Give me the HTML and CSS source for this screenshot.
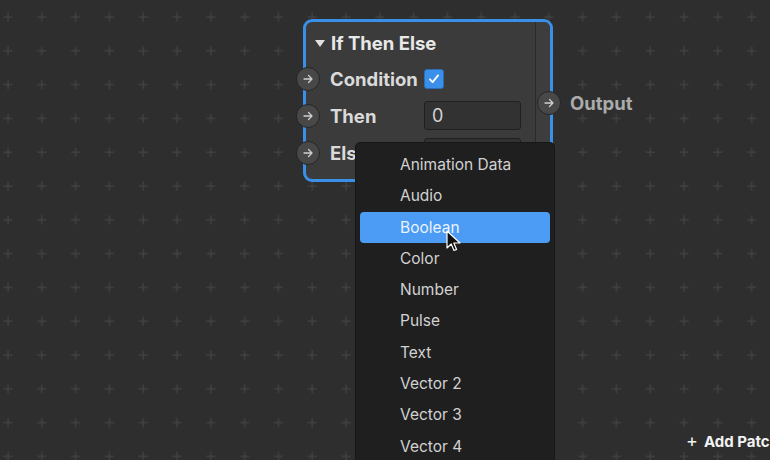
FILE: index.html
```html
<!DOCTYPE html>
<html lang="en">
<head>
    <meta charset="UTF-8">
    <title>Patch Editor</title>
    <link rel="stylesheet" href="styles.css">
</head>
<body>

    <!-- Canvas with dot grid -->
    <div class="canvas">
        <svg class="grid" width="100%" height="100%">
            <defs>
                <pattern id="plus" x="-9" y="0" width="33.8" height="33.8" patternUnits="userSpaceOnUse">
                    <path d="M12.5 17h9M17 12.5v9" stroke="#434343" stroke-width="1.2"/>
                </pattern>
            </defs>
            <rect width="100%" height="100%" fill="url(#plus)"/>
        </svg>

        <!-- Patch node -->
        <div class="node">
            <div class="node-main">
                <div class="node-title">
                    <span class="caret"></span>
                    If Then Else
                </div>
                <div class="node-row">
                    <span class="port"><svg viewBox="0 0 12 12"><path d="M2 6h8M6.5 2.5 10 6l-3.5 3.5"/></svg></span>
                    <span class="label">Condition</span>
                    <span class="checkbox"><svg viewBox="0 0 20 20"><path d="M5.5 10.5l3 3 6-7.5"/></svg></span>
                </div>
                <div class="node-row">
                    <span class="port"><svg viewBox="0 0 12 12"><path d="M2 6h8M6.5 2.5 10 6l-3.5 3.5"/></svg></span>
                    <span class="label">Then</span>
                    <span class="field">0</span>
                </div>
                <div class="node-row">
                    <span class="port"><svg viewBox="0 0 12 12"><path d="M2 6h8M6.5 2.5 10 6l-3.5 3.5"/></svg></span>
                    <span class="label">Else</span>
                    <span class="field"></span>
                </div>
            </div>
            <div class="node-side"></div>

            <div class="output">
                <span class="port"><svg viewBox="0 0 12 12"><path d="M2 6h8M6.5 2.5 10 6l-3.5 3.5"/></svg></span>
                <span class="output-label">Output</span>
            </div>
        </div>

        <!-- Type menu -->
        <ul class="menu">
            <li>Animation Data</li>
            <li>Audio</li>
            <li class="active">Boolean</li>
            <li>Color</li>
            <li>Number</li>
            <li>Pulse</li>
            <li>Text</li>
            <li>Vector 2</li>
            <li>Vector 3</li>
            <li>Vector 4</li>
        </ul>

        <!-- Mouse pointer -->
        <svg class="cursor" width="16" height="24" viewBox="0 0 16 24">
            <path d="M1 1v17l4.2-4 2.8 6.5 2.6-1.1-2.8-6.4H14z" fill="#111" stroke="#fff" stroke-width="1.2" stroke-linejoin="round"/>
        </svg>

        <div class="add-patch"><span class="plus-sign">+</span>Add Patch</div>
    </div>

</body>
</html>
```

FILE: styles.css
```css
/* Reset */
html, body {
    margin: 0;
    padding: 0;
    background: #2e2e2e;
    font-family: Inter, "Noto Sans", sans-serif;
}

/* Canvas */
.canvas {
    position: relative;
    width: 770px;
    height: 460px;
    overflow: hidden;
    background: #2e2e2e;
}

.grid {
    position: absolute;
    left: 0;
    top: 0;
}

/* Node */
.node {
    position: absolute;
    left: 303px;
    top: 19px;
    width: 244px;
    height: 157px;
    border: 3px solid #3a8fe6;
    border-radius: 9px;
    background: #3b3b3b;
    display: flex;
}

.node-main {
    flex: 1;
    padding-top: 4px;
}

.node-side {
    width: 14px;
    border-left: 1px solid #2a2a2a;
    background: #3d3d3d;
    border-radius: 0 6px 6px 0;
}

.node-title {
    height: 34px;
    display: flex;
    align-items: center;
    padding-left: 9px;
    font-size: 18.5px;
    font-weight: 700;
    color: #e8e8e8;
}

.caret {
    width: 0;
    height: 0;
    border-left: 5.5px solid transparent;
    border-right: 5.5px solid transparent;
    border-top: 7px solid #e0e0e0;
    margin-right: 6px;
}

.node-row {
    height: 37px;
    display: flex;
    align-items: center;
}

.port {
    width: 22px;
    height: 22px;
    border-radius: 50%;
    background: #484848;
    border: 1px solid #262626;
    display: flex;
    align-items: center;
    justify-content: center;
    flex-shrink: 0;
}

.node-row .port {
    margin-left: -10px;
}

.port svg {
    width: 12px;
    height: 12px;
    fill: none;
    stroke: #cfcfcf;
    stroke-width: 1.3;
    stroke-linecap: round;
    stroke-linejoin: round;
}

.label {
    width: 94px;
    margin-left: 10px;
    font-size: 18.5px;
    font-weight: 700;
    color: #dadada;
}

.checkbox {
    width: 18px;
    height: 18px;
    border-radius: 3px;
    background: #3b8fe8;
    border: 1px solid #2a6fbd;
    display: flex;
}

.checkbox svg {
    width: 18px;
    height: 18px;
    fill: none;
    stroke: #fff;
    stroke-width: 2;
    stroke-linecap: round;
    stroke-linejoin: round;
}

.field {
    width: 88px;
    height: 27px;
    padding-left: 7px;
    border: 1px solid #202020;
    border-radius: 3px;
    background: #323232;
    color: #d4d4d4;
    font-size: 18px;
    line-height: 27px;
}

/* Output port sits on the right border */
.output {
    position: absolute;
    left: 231px;
    top: 69px;
    display: flex;
    align-items: center;
}

.output-label {
    margin-left: 9px;
    font-size: 18.5px;
    font-weight: 700;
    color: #ababab;
}

/* Dropdown menu */
.menu {
    position: absolute;
    left: 355px;
    top: 142px;
    width: 190px;
    margin: 0;
    padding: 6px 4px 0 4px;
    height: 330px;
    list-style: none;
    background: #1f1f1f;
    border: 1px solid #171717;
    border-radius: 5px 5px 0 0;
}

.menu li {
    height: 31.3px;
    line-height: 31.3px;
    padding-left: 40px;
    font-size: 15.5px;
    color: #d2d2d2;
    border-radius: 4px;
}

.menu li.active {
    background: #4c9bf5;
    color: #eaf4ff;
}

.cursor {
    position: absolute;
    left: 446px;
    top: 230px;
}

/* Add patch button */
.add-patch {
    position: absolute;
    left: 686px;
    top: 430px;
    white-space: nowrap;
    font-size: 15px;
    font-weight: 700;
    color: #f2f2f2;
}

.plus-sign {
    font-weight: 400;
    font-size: 18px;
    margin-right: 6px;
}
```
